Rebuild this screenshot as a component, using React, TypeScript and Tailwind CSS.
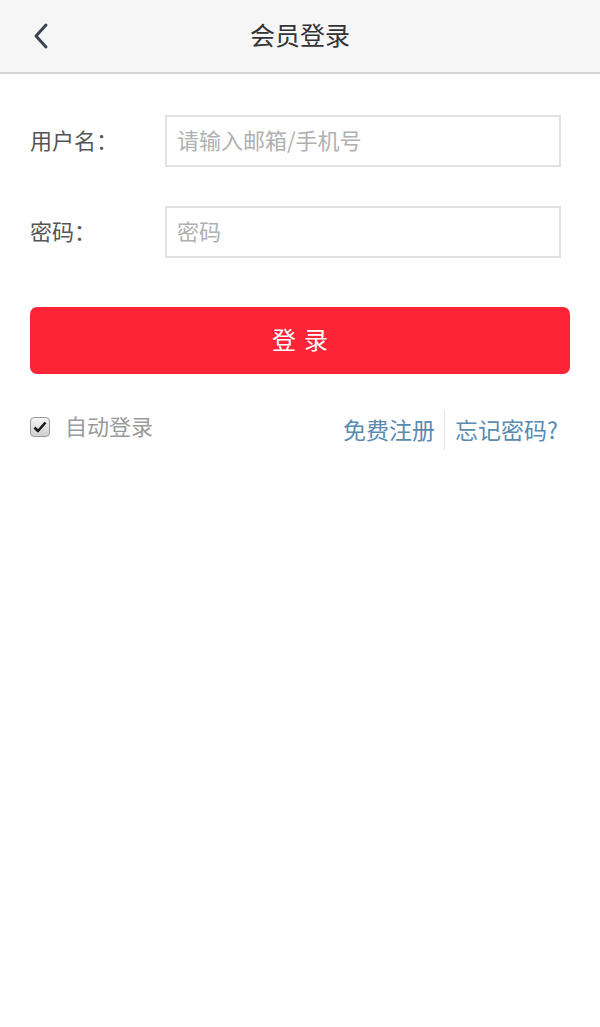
import { useState } from 'react'

const FONT = { fontFamily: '"Noto Sans CJK SC", "Noto Sans", sans-serif' }

function BackIcon() {
  return (
    <svg width="18" height="28" viewBox="0 0 18 28" fill="none">
      <path d="M14 3 L4 14 L14 25" stroke="#3d4250" strokeWidth="3" strokeLinecap="round" strokeLinejoin="round" />
    </svg>
  )
}

function CheckBox({ checked, onToggle }: { checked: boolean; onToggle: () => void }) {
  return (
    <button
      onClick={onToggle}
      className="w-[20px] h-[20px] rounded-[4px] border border-[#9a9a9a] bg-gradient-to-b from-[#f4f4f4] to-[#cfcfcf] flex items-center justify-center"
    >
      {checked && (
        <svg width="14" height="14" viewBox="0 0 14 14">
          <path d="M1.5 7.5 L5 11 L12.5 2.5" stroke="#1a1a1a" strokeWidth="2.6" fill="none" strokeLinejoin="round" />
        </svg>
      )}
    </button>
  )
}

export default function App() {
  const [remember, setRemember] = useState(true)

  return (
    <div className="w-[600px] min-h-[1027px] bg-white" style={FONT}>
      {/* header */}
      <div className="h-[74px] bg-[#f6f6f6] border-b-2 border-[#d6d6d6] flex items-center relative">
        <button className="absolute left-[32px] top-[22px]">
          <BackIcon />
        </button>
        <h1 className="flex-1 text-center text-[25px] text-[#333] leading-none -mt-[4px]">会员登录</h1>
      </div>

      <div className="px-[30px]">
        <div className="flex items-center mt-[41px]">
          <label className="w-[135px] text-[22px] text-[#555] -mt-[4px]">用户名：</label>
          <input
            placeholder="请输入邮箱/手机号"
            className="w-[396px] h-[52px] border-2 border-[#e2e2e2] px-[10px] pb-[4px] text-[22px] text-[#333] placeholder:text-[#b0b0b0] outline-none"
          />
        </div>
        <div className="flex items-center mt-[39px]">
          <label className="w-[135px] text-[22px] text-[#555] -mt-[4px]">密码：</label>
          <input
            type="password"
            placeholder="密码"
            className="w-[396px] h-[52px] border-2 border-[#e2e2e2] px-[10px] pb-[4px] text-[22px] text-[#333] placeholder:text-[#b0b0b0] outline-none"
          />
        </div>

        <button className="mt-[49px] w-[540px] h-[67px] rounded-[7px] bg-[#fe2437] text-white text-[24px] tracking-[8px] pl-[8px] pb-[4px]">
          登录
        </button>

        <div className="flex items-center justify-between mt-[36px]">
          <div className="flex items-center gap-[15px] -mt-[6px]">
            <CheckBox checked={remember} onToggle={() => setRemember(r => !r)} />
            <span className="text-[22px] text-[#9a9a9a] -mt-[4px]">自动登录</span>
          </div>
          <div className="flex items-center text-[23px] text-[#5b8bb0] pr-[12px]">
            <a className="pr-[9px] -mt-[2px]">免费注册</a>
            <span className="w-px h-[40px] bg-[#e4e4e4]" />
            <a className="pl-[10px] -mt-[2px]">忘记密码?</a>
          </div>
        </div>
      </div>
    </div>
  )
}
